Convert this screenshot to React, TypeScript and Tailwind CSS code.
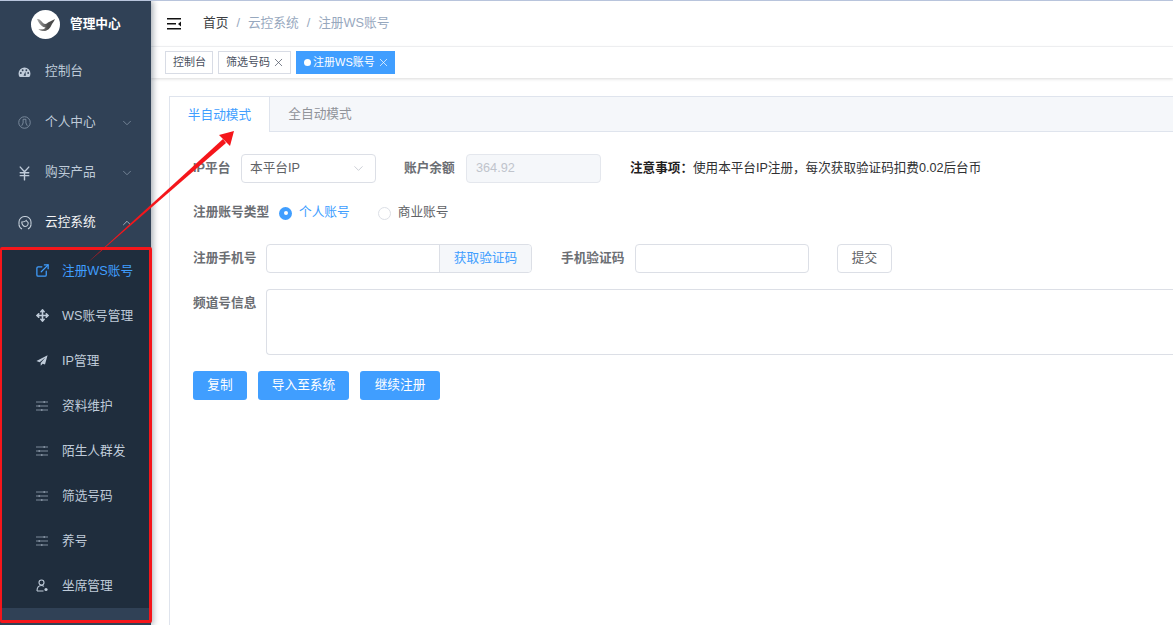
import { ChevronDown, ChevronUp, ExternalLink, JapaneseYen, Move, X } from 'lucide-react'
import type { ReactNode } from 'react'

const font = { fontFamily: '"Liberation Sans", "Noto Sans CJK SC", sans-serif' }

function Dashboard() {
  return (
    <svg viewBox="0 0 14 12" className="w-[13px] h-[11px]" fill="#bfcbd9">
      <path d="M7 .5A6.5 6.5 0 0 0 .5 7c0 1.500.4 2.900 1.200 4h10.600c.8-1.100 1.200-2.500 1.200-4A6.500 6.500 0 0 0 7 .5Z" />
      <circle cx="3" cy="6.500" r="1" fill="#304156" />
      <circle cx="5" cy="3.500" r="1" fill="#304156" />
      <circle cx="9" cy="3.500" r="1" fill="#304156" />
      <circle cx="11" cy="6.500" r="1" fill="#304156" />
      <path d="M6 9.500 8 5l.5 4.500Z" fill="#304156" />
    </svg>
  )
}

function Person() {
  return (
    <svg viewBox="0 0 14 14" className="w-[13px] h-[13px]" fill="none" stroke="#8796a8" strokeWidth="0.9">
      <circle cx="7" cy="7" r="6.200" />
      <path d="M5.500 3.500v4l-1.500 3M8.500 3.500v4l1.500 3M5.500 3.500h3" />
    </svg>
  )
}

function Headset() {
  return (
    <svg viewBox="0 0 14 14" className="w-[14px] h-[14px] shrink-0" fill="none" stroke="#c4ced9" strokeWidth="1.100">
      <path d="M1 8.500V6a6 5.500 0 0 1 12 0v2.500" />
      <path d="M3.800 6c1.500 0 3.500-.5 4.400-1.500C8.700 5.500 10.200 6 10.200 7c0 2-1.700 3.500-3.200 3.500S3.800 8.500 3.800 6Z" />
      <path d="M1 8.500c0 2 1.300 3.500 3 4.500M13 8.500c0 2-1.300 3.500-3 4.500" />
    </svg>
  )
}

function Plane() {
  return (
    <svg viewBox="0 0 14 14" className="w-[13px] h-[13px]" fill="#bfcbd9">
      <path d="M13.500 1 .5 7.500l3.800 1.400L11 3.500 5.500 9.800v3.400l2.300-2.500 2.700 1Z" />
    </svg>
  )
}

function Sliders() {
  return (
    <svg viewBox="0 0 12 10" className="w-[12px] h-[10px]" fill="#7f8c9c">
      <rect x="0" y="0.500" width="12" height="1" />
      <rect x="7.500" y="0" width="1.500" height="2" />
      <rect x="0" y="4.500" width="12" height="1" />
      <rect x="2.500" y="4" width="1.500" height="2" />
      <rect x="0" y="8.500" width="12" height="1" />
      <rect x="5" y="8" width="1.500" height="2" />
    </svg>
  )
}

function Seat() {
  return (
    <svg viewBox="0 0 12 13" className="w-[12px] h-[13px]" fill="none" stroke="#bfcbd9" strokeWidth="1.100">
      <circle cx="5.500" cy="3.500" r="2.500" />
      <path d="M1 12c0-3 1.500-5.500 4.500-5.500 1 0 1.800.3 2.400.9M1 12h6.500" />
      <circle cx="10" cy="10.500" r="1.600" fill="#bfcbd9" stroke="none" />
    </svg>
  )
}

function Logo() {
  return (
    <div className="w-[29px] h-[29px] rounded-full bg-white flex items-center justify-center">
      <svg viewBox="0 0 20 16" className="w-[20px] h-[16px]">
        <defs>
          <linearGradient id="bird" x1="0" y1="0" x2="1" y2="0">
            <stop offset="0" stopColor="#a8a8a8" />
            <stop offset="0.600" stopColor="#4a4a4a" />
          </linearGradient>
        </defs>
        <path d="M1 2c3 0 4 2 6 4 1.500 1.500 4 1 5-.5L19 2c-1 2.500-2.500 4-3.500 6-1.500 4-5 6.500-9 6-2-.3-3.500-1-4-2 3 .5 6 .5 7-1.500C7 10.500 3 7 1 2Z" fill="url(#bird)" />
      </svg>
    </div>
  )
}

function MainItem({ icon, label, arrow, bright, h }: { icon: ReactNode; label: string; arrow?: 'up' | 'down'; bright?: boolean; h: string }) {
  return (
    <div className={`${h} flex items-center pl-[18px] pr-[17px] text-[12.700px] ${bright ? 'text-[#f4f4f5]' : 'text-[#bfcbd9]'}`}>
      <span className="w-[13px] mr-[14px] flex justify-center">{icon}</span>
      <span className="flex-1">{label}</span>
      {arrow === 'down' && <ChevronDown className="w-[14px] h-[14px] text-[#8796a8]" strokeWidth={1.300} />}
      {arrow === 'up' && <ChevronUp className="w-[14px] h-[14px] text-[#bfcbd9]" strokeWidth={1.300} />}
    </div>
  )
}

function SubItem({ icon, label, active }: { icon: ReactNode; label: string; active?: boolean }) {
  return (
    <div className={`h-[45px] flex items-center pl-[36px] text-[12.700px] ${active ? 'text-[#409eff]' : 'text-[#bfcbd9]'}`}>
      <span className="w-[12px] mr-[14px] flex justify-center">{icon}</span>
      <span className="pt-[2px]">{label}</span>
    </div>
  )
}

function Sidebar() {
  return (
    <aside className="w-[151px] shrink-0 bg-[#304156] flex flex-col shadow-[2px_0_6px_rgba(0,21,41,0.35)] z-10">
      <div className="h-[46px] flex items-center pl-[31px] gap-[10px] pt-[1px]">
        <Logo />
        <span className="text-[12.700px] font-semibold text-white">管理中心</span>
      </div>
      <MainItem h="h-[50px]" icon={<Dashboard />} label="控制台" />
      <MainItem h="h-[51px]" icon={<Person />} label="个人中心" arrow="down" />
      <MainItem h="h-[50px]" icon={<JapaneseYen className="w-[17px] h-[17px] text-[#bfcbd9] shrink-0" />} label="购买产品" arrow="down" />
      <MainItem h="h-[50px]" icon={<Headset />} label="云控系统" arrow="up" bright />
      <div className="bg-[#1f2d3d] h-[360px] shrink-0">
        <SubItem active icon={<ExternalLink className="w-[15px] h-[15px] shrink-0" />} label="注册WS账号" />
        <SubItem icon={<Move className="w-[13px] h-[13px] shrink-0" strokeWidth={3} />} label="WS账号管理" />
        <SubItem icon={<Plane />} label="IP管理" />
        <SubItem icon={<Sliders />} label="资料维护" />
        <SubItem icon={<Sliders />} label="陌生人群发" />
        <SubItem icon={<Sliders />} label="筛选号码" />
        <SubItem icon={<Sliders />} label="养号" />
        <SubItem icon={<Seat />} label="坐席管理" />
      </div>
    </aside>
  )
}

function Tag({ label, active, close = true }: { label: string; active?: boolean; close?: boolean }) {
  return (
    <div className={`h-[23px] flex items-center border text-[11px] pl-[7px] ${active ? 'bg-[#409eff] border-[#409eff] text-white pr-[4px]' : `bg-white border-[#d8dce5] text-[#495060] ${close ? 'pr-[5px]' : 'pr-[6px]'}`}`}>
      {active && <span className="w-[7px] h-[7px] rounded-full bg-white mr-[2px]" />}
      <span>{label}</span>
      {close && <X className="w-[13px] h-[13px] ml-[2px]" strokeWidth={1.300} />}
    </div>
  )
}

function Label({ children, className = '' }: { children: ReactNode; className?: string }) {
  return <span className={`text-[12.700px] font-semibold text-[#6b6e73] ${className}`}>{children}</span>
}

function Button({ children, w }: { children: ReactNode; w: string }) {
  return <div className={`${w} h-[29px] rounded-[3px] bg-[#409eff] text-white text-[12.700px] flex items-center justify-center`}>{children}</div>
}

function Form() {
  return (
    <div className="pl-[23px] pt-[22px]">
      <div className="flex items-center h-[29px]">
        <Label className="w-[48px]">IP平台</Label>
        <div className="w-[135px] h-[29px] border border-[#dcdfe6] rounded-[4px] flex items-center pl-[8px] pr-[9px] text-[12.700px] text-[#606266] justify-between">
          本平台IP
          <ChevronDown className="w-[15px] h-[15px] text-[#c0c4cc]" strokeWidth={1.300} />
        </div>
        <Label className="ml-[28px] w-[62px]">账户余额</Label>
        <div className="w-[135px] h-[29px] border border-[#e4e7ed] bg-[#f5f7fa] rounded-[4px] flex items-center pl-[9px] text-[12.700px] text-[#c0c4cc]">364.92</div>
        <div className="ml-[29px] text-[12.600px] text-[#303133]">
          <span className="font-bold text-[#1f2020]">{'注意事项\uFF1A'}</span>{'使用本平台IP注册\uFF0C每次获取验证码扣费0.02后台币'}
        </div>
      </div>
      <div className="flex items-center h-[20px] mt-[20px]">
        <Label className="w-[86px]">注册账号类型</Label>
        <span className="w-[13px] h-[13px] rounded-full bg-[#409eff] flex items-center justify-center">
          <span className="w-[4px] h-[4px] rounded-full bg-white" />
        </span>
        <span className="ml-[7px] text-[12.700px] text-[#409eff]">个人账号</span>
        <span className="ml-[28px] w-[13px] h-[13px] rounded-full border border-[#dcdfe6]" />
        <span className="ml-[7px] text-[12.700px] text-[#606266]">商业账号</span>
      </div>
      <div className="flex items-center h-[29px] mt-[21px]">
        <Label className="w-[73px]">注册手机号</Label>
        <div className="w-[266px] h-[29px] border border-[#dcdfe6] rounded-[4px] flex">
          <div className="flex-1" />
          <div className="w-[92px] border-l border-[#dcdfe6] bg-[#f5f7fa] text-[#409eff] text-[12.700px] flex items-center justify-center rounded-r-[4px]">获取验证码</div>
        </div>
        <Label className="ml-[29px] w-[74px]">手机验证码</Label>
        <div className="w-[174px] h-[29px] border border-[#dcdfe6] rounded-[4px]" />
        <div className="ml-[28px] w-[55px] h-[29px] border border-[#dcdfe6] rounded-[4px] text-[12.700px] text-[#606266] flex items-center justify-center">提交</div>
      </div>
      <div className="flex mt-[16px]">
        <Label className="w-[73px] pt-[5px]">频道号信息</Label>
        <div className="flex-1 h-[66px] border border-[#dcdfe6] border-r-0 rounded-l-[4px]" />
      </div>
      <div className="flex gap-[11px] mt-[16px]">
        <Button w="w-[54px]">复制</Button>
        <Button w="w-[91px]">导入至系统</Button>
        <Button w="w-[80px]">继续注册</Button>
      </div>
    </div>
  )
}

function Annotations() {
  return (
    <>
      <div className="absolute left-0 top-[246px] w-[152px] h-[376px] border-[3px] border-l-[2px] border-[#f5161b] rounded-[2px] pointer-events-none z-20" />
      <svg className="absolute left-0 top-[-1px] w-[400px] h-[300px] pointer-events-none z-20" viewBox="0 0 400 300">
        <path d="M85 265 L223 139 L226 143 Z" fill="#f5161b" />
        <path d="M234 131 L219 135 L230 146 Z" fill="#f5161b" />
      </svg>
    </>
  )
}

export default function App() {
  return (
    <div className="relative w-[1173px] h-[625px] overflow-hidden bg-white flex border-t border-[#b8c4dc]" style={font}>
      <Sidebar />
      <main className="flex-1 min-w-0 flex flex-col">
        <header className="h-[46px] flex items-center pl-[16px] text-[12.700px] border-b border-[#f3f4f6]">
          <svg viewBox="0 0 14 12" className="w-[14px] h-[12px] mr-[22px]" fill="#111">
            <rect x="0" y="0" width="14" height="1.500" />
            <rect x="0" y="5" width="9" height="1.500" />
            <rect x="0" y="10" width="14" height="1.500" />
            <path d="M14 3.500v5l-3-2.500Z" />
          </svg>
          <span className="text-[#3a3c40]">首页</span>
          <span className="mx-[8px] text-[#97a8be]">/</span>
          <span className="text-[#97a8be]">云控系统</span>
          <span className="mx-[8px] text-[#97a8be]">/</span>
          <span className="text-[#97a8be]">注册WS账号</span>
        </header>
        <div className="h-[31px] flex items-center pl-[14px] gap-[5px] shadow-[0_1px_3px_rgba(0,0,0,0.15)]">
          <Tag label="控制台" close={false} />
          <Tag label="筛选号码" />
          <Tag label="注册WS账号" active />
        </div>
        <div className="flex-1 pl-[18px] pt-[18px] min-h-0">
          <div className="h-full border-l border-t border-[#dfe4ed]">
            <div className="h-[35px] flex bg-[#f5f7fa] border-b border-[#dfe4ed] text-[12.700px]">
              <div className="w-[100px] h-[35px] pt-[2px] bg-white border-r border-[#dfe4ed] text-[#409eff] flex items-center justify-center">半自动模式</div>
              <div className="w-[100px] pt-[2px] flex items-center justify-center text-[#909399]">全自动模式</div>
            </div>
            <Form />
          </div>
        </div>
      </main>
      <Annotations />
    </div>
  )
}
